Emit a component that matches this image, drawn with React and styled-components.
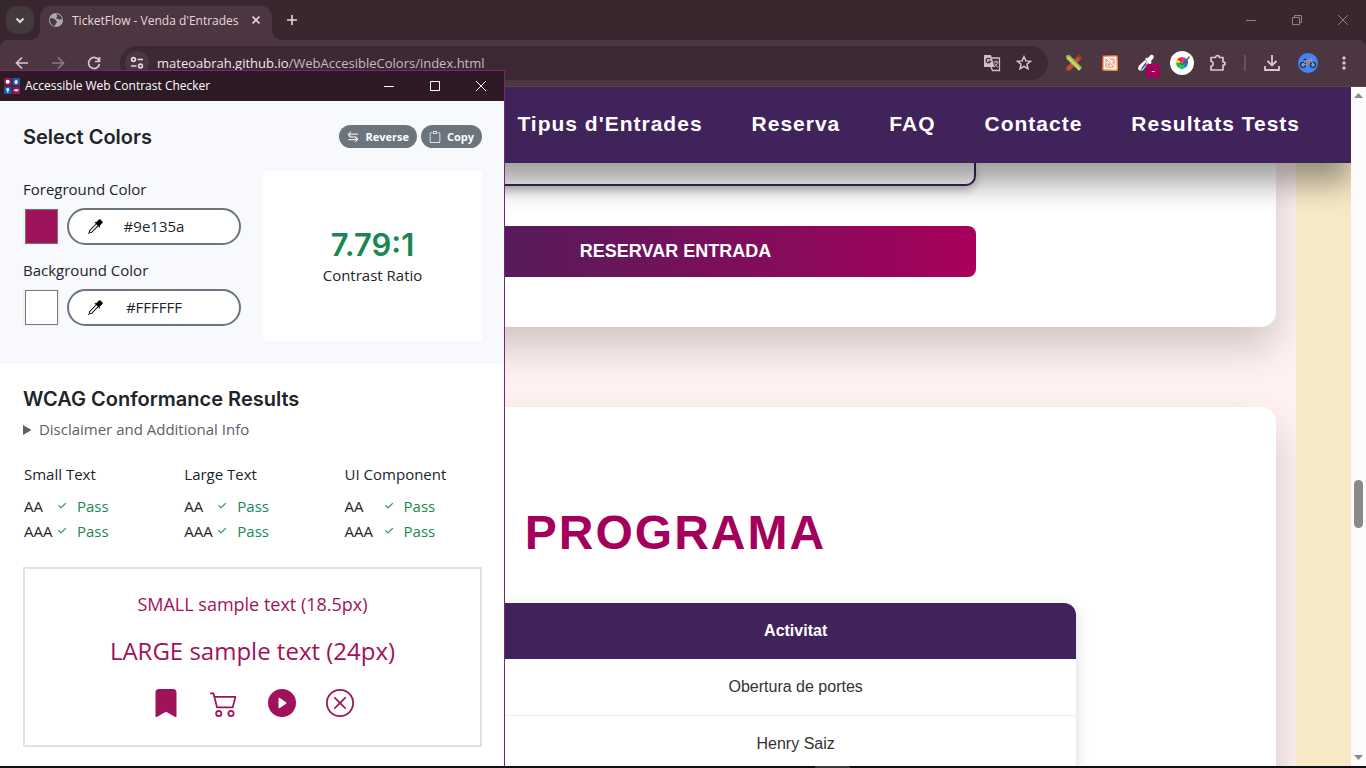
import React from "react";
import styled, { createGlobalStyle } from "styled-components";
import {
  BsBookmarkFill,
  BsCart2,
  BsCheck2,
  BsClipboard,
  BsEyedropper,
  BsPlayCircleFill,
  BsXCircle,
} from "react-icons/bs";

const GlobalStyle = createGlobalStyle`
  *, *::before, *::after { box-sizing: border-box; }
  body { margin: 0; overflow: hidden; }
  button, input { font: inherit; color: inherit; margin: 0; }
  h1, h2, h3, p { margin: 0; }
`;

const uiFont = `"Open Sans", "Noto Sans", sans-serif`;
const arial = `"Liberation Sans", Arial, sans-serif`;
const inter = `Inter, sans-serif`;

const Desktop = styled.div`
  position: relative;
  display: flex;
  flex-direction: column;
  height: 100vh;
  overflow: hidden;
  background: #38272f;
  font-family: ${uiFont};
`;

/* ---------- browser chrome ---------- */

const TitleBar = styled.header`
  display: flex;
  height: 40px;
  flex: none;
  padding-left: 6px;
  background: #38272f;
  color: #e6d7dd;
`;

const TabSearch = styled.button`
  display: grid;
  place-items: center;
  width: 28px;
  height: 28px;
  margin: 6px 6px 0 0;
  padding: 0;
  border: 0;
  border-radius: 10px;
  background: #44393e;
`;

const Tab = styled.div`
  position: relative;
  display: flex;
  align-items: center;
  width: 232px;
  height: 34px;
  margin-top: 6px;
  padding: 0 8px 6px;
  border-radius: 10px 10px 0 0;
  background: #4c3641;
  font-size: 12px;

  &::before,
  &::after {
    content: "";
    position: absolute;
    bottom: 0;
    width: 10px;
    height: 10px;
  }
  &::before {
    right: 100%;
    background: radial-gradient(circle at 0 0, transparent 10px, #4c3641 10px);
  }
  &::after {
    left: 100%;
    background: radial-gradient(circle at 100% 0, transparent 10px, #4c3641 10px);
  }
`;

const TabTitle = styled.span`
  flex: 1;
  margin-left: 8px;
  white-space: nowrap;
`;

const BareButton = styled.button`
  position: relative;
  display: grid;
  place-items: center;
  flex: none;
  width: ${(p) => p.$w}px;
  height: ${(p) => p.$h}px;
  padding: 0;
  border: 0;
  background: transparent;
`;

const NewTab = styled(BareButton)`
  margin: 6px 0 0 6px;
`;

const WindowControls = styled.div`
  display: flex;
  margin-left: auto;
  color: ${(p) => p.$color};
`;

const Toolbar = styled.div`
  display: flex;
  align-items: center;
  flex: none;
  height: 47px;
  padding: 0 4px;
  border-bottom: 1px solid #54484b;
  border-radius: 8px 8px 0 0;
  background: #4c3641;
  color: #dfc3d1;
`;

const Omnibox = styled.div`
  display: flex;
  align-items: center;
  flex: 1;
  height: 34px;
  margin: 0 8px;
  padding: 0 8px 0 5px;
  border-radius: 17px;
  background: #3b2933;
`;

const SiteInfo = styled(BareButton)`
  border-radius: 50%;
  background: #4c3641;
`;

const Address = styled.div`
  flex: 1;
  margin-left: 8px;
  color: #c9bac2;
  font-size: 13px;
  line-height: 20px;
  b {
    color: #f3e6ec;
    font-weight: 400;
  }
`;

const Badge = styled.span`
  position: absolute;
  left: 18px;
  top: 18px;
  width: 14px;
  height: 14px;
  border-radius: 3px;
  background: #a3005c;
  color: #fff;
  font-size: 10px;
  line-height: 13px;
  text-align: center;
`;

const ToolDivider = styled.span`
  width: 2px;
  height: 16px;
  margin: 0 8px;
  background: #6a515e;
`;

/* ---------- web page ---------- */

const Viewport = styled.div`
  display: flex;
  flex: 1;
  min-height: 0;
`;

const Page = styled.div`
  flex: 1;
  min-width: 0;
  overflow: hidden;
  background: #f6e9c7;
  font-family: ${arial};
`;

const SiteHeader = styled.nav`
  position: relative;
  z-index: 1;
  display: flex;
  justify-content: flex-end;
  align-items: center;
  gap: 49px;
  height: 76px;
  padding: 0 51px 2px 0;
  background: #3f235a;
  box-shadow: 0 20px 30px rgba(0, 0, 0, 0.38);
`;

const NavLink = styled.a`
  color: #fff;
  font-size: 21px;
  font-weight: 700;
  letter-spacing: 1px;
  line-height: 24px;
  text-decoration: none;
  white-space: nowrap;
`;

const Main = styled.main`
  display: flex;
  flex-direction: column;
  gap: 80px;
  height: 100%;
  margin: 0 55px;
  padding: 0 20px;
  overflow: hidden;
  background: #fff2f0;
`;

const Card = styled.section`
  padding: ${(p) => (p.$open ? "0 200px 50px" : "98px 200px 50px")};
  border-radius: ${(p) => (p.$open ? "0 0 15px 15px" : "15px")};
  background: #fff;
  box-shadow: 0 20px 40px rgba(0, 0, 0, 0.19);
`;

const BookingForm = styled.form`
  display: flex;
  flex-direction: column;
  gap: 40px;
  max-width: 601px;
  margin: 0 auto;
`;

const Field = styled.input`
  height: 23px;
  border: 2px solid #3f235a;
  border-top: 0;
  border-radius: 0 0 10px 10px;
  background: #fff;
  box-shadow: 0 4px 10px rgba(0, 0, 0, 0.25);
`;

const SubmitButton = styled.button`
  height: 51px;
  border: 0;
  border-radius: 8px;
  background: linear-gradient(90deg, #3f235a, #a8005c);
  color: #fff;
  font-size: 18px;
  font-weight: 700;
`;

const SectionTitle = styled.h2`
  margin-bottom: 42px;
  color: #a3005c;
  font-size: 48px;
  letter-spacing: 2px;
  line-height: 56px;
  text-align: center;
`;

const Schedule = styled.table`
  width: 100%;
  table-layout: fixed;
  border-spacing: 0;
  overflow: hidden;
  border-radius: 12px;
  background: #fff;
  box-shadow: 0 4px 15px rgba(0, 0, 0, 0.15);
  color: #333;
  font-size: 16px;
  line-height: 20px;
  text-align: center;

  th,
  td {
    padding: 18px;
  }
  th {
    background: #3f235a;
    color: #fff;
  }
  th:first-child {
    width: 30%;
  }
  td {
    border-bottom: 1px solid #eee;
  }
`;

const Scrollbar = styled.div`
  display: flex;
  flex-direction: column;
  align-items: center;
  flex: none;
  width: 15px;
  padding: 6px 0;
  background: #fcfcfc;
`;

const Thumb = styled.span`
  width: 9px;
  height: 48px;
  border-radius: 5px;
  background: #8a8a8a;
`;

const Track = styled.span`
  flex: ${(p) => p.$grow} 0 0;
`;

const Taskbar = styled.footer`
  position: relative;
  z-index: 3;
  flex: none;
  height: 2px;
  background: linear-gradient(90deg, #101114 815px, #3a3a3c 815px, #3a3a3c 850px, #101114 850px);
`;

/* ---------- contrast checker window ---------- */

const Popup = styled.aside`
  position: absolute;
  z-index: 2;
  left: 0;
  top: 70px;
  bottom: 2px;
  width: 505px;
  overflow: hidden;
  border-top: 1px solid #7b2473;
  border-right: 1px solid #7b2473;
  background: #fff;
  color: #212529;
  font-size: 15px;
  line-height: 24px;
`;

const PopupBar = styled.div`
  display: flex;
  align-items: center;
  height: 30px;
  padding-left: 4px;
  background: #2d1a25;
  color: #fff;
  font-size: 12px;
`;

const PopupTitle = styled.span`
  margin-left: 5px;
`;

const Picker = styled.section`
  padding: 24px 22px 23px 23px;
  background: #f8f9fc;
`;

const PickerHead = styled.div`
  display: flex;
  align-items: center;
  gap: 4px;
  height: 23px;
  margin-bottom: 23px;
`;

const Heading = styled.h1`
  flex: 1;
  font-family: ${inter};
  font-size: 20px;
  font-weight: 600;
  line-height: 24px;
`;

const PillButton = styled.button`
  display: flex;
  align-items: center;
  gap: 6px;
  height: 23px;
  padding: 0 8px;
  border: 0;
  border-radius: 12px;
  background: #6c757d;
  color: #fff;
  font-size: 11px;
  font-weight: 700;
`;

const PickerGrid = styled.div`
  display: grid;
  grid-template-columns: 218fr 219fr;
  gap: 22px;
`;

const ColorFields = styled.div`
  display: flex;
  flex-direction: column;
  padding-top: 6px;
`;

const ColorLabel = styled.label`
  margin-bottom: 7px;
`;

const ColorRow = styled.div`
  display: flex;
  gap: 7px;
  margin-bottom: 13px;
`;

const Swatch = styled.input`
  appearance: none;
  width: 37px;
  height: 37px;
  padding: 1px 2px;
  border: 0;
  background: #f0f1f3;

  &::-webkit-color-swatch-wrapper {
    padding: 0;
  }
  &::-webkit-color-swatch {
    border: 1px solid #777;
    border-radius: 0;
  }
`;

const HexPill = styled.div`
  display: flex;
  align-items: center;
  flex: 1;
  height: 37px;
  padding-right: 52px;
  border: 2px solid #6c757d;
  border-radius: 19px;
  background: #fff;
`;

const HexInput = styled.input`
  flex: 1;
  width: 0;
  padding: 0 0 2px;
  border: 0;
  outline: 0;
  background: transparent;
  text-align: center;
`;

const Ratio = styled.div`
  display: flex;
  flex-direction: column;
  align-items: center;
  justify-content: center;
  height: 170px;
  background: #fff;
`;

const RatioValue = styled.strong`
  padding-top: 2px;
  color: #198754;
  font-family: ${inter};
  font-size: 31px;
  font-weight: 600;
  line-height: 36px;
`;

const Results = styled.section`
  padding: 23px 22px 20px 23px;
`;

const Disclaimer = styled.details`
  margin: 6px 0 21px;
  color: #5c6166;
`;

const ResultGrid = styled.div`
  display: grid;
  grid-template-columns: 35% 35% 30%;
  margin: 0 0 23px 1px;
`;

const ResultTitle = styled.h3`
  margin-bottom: 8px;
  font-size: 15px;
  font-weight: 400;
`;

const ResultRow = styled.p`
  display: grid;
  grid-template-columns: ${(p) => (p.$wide ? 39 : 33)}px 20px 1fr;
  line-height: 25px;
  svg {
    margin-top: 7px;
    stroke-width: 1;
  }
`;

const Pass = styled.span`
  display: contents;
  color: #198754;
`;

const Sample = styled.div`
  display: flex;
  flex-direction: column;
  align-items: center;
  height: 180px;
  padding-top: 20px;
  border: 2px solid #dee2e6;
  color: #9e135a;
`;

const SampleText = styled.p`
  margin-bottom: 17px;
  font-size: ${(p) => p.$size}px;
  line-height: 30px;
`;

const SampleIcons = styled.div`
  display: flex;
  gap: 30px;
  margin-top: 6px;
`;

/* ---------- drawings ---------- */

const Stroke = ({ d, size = 16, w = 2, ...rest }) => (
  <svg width={size} height={size} viewBox="0 0 16 16" fill="none" stroke="currentColor" strokeWidth={w} {...rest}>
    <path d={d} />
  </svg>
);

const Globe = () => (
  <svg width="16" height="16" viewBox="0 0 16 16">
    <circle cx="8" cy="8" r="7" fill="#a5abb0" />
    <path
      d="M2 6.500c2.500-.5 3.500.3 5 .8.500 1.700 2 1.200 2 2.700 0 1-1.200 1-1.400 2l-.9 2C4 13.500 1.500 10.500 2 6.500zM8.500 2.200C8 3.500 10 3.200 9.500 4.600 9 5.600 8 5 8 6.200c1.800 0 2.200 1.500 3.500 1.200 1-.2 1.300-.2 2.500 0C14 4.500 11.500 2.200 8.500 2.200z"
      fill="#4c3641"
    />
  </svg>
);

const Tune = () => (
  <svg width="14" height="14" viewBox="0 0 14 14" fill="none" stroke="#e9d5de" strokeWidth="1.6">
    <circle cx="3.500" cy="3.500" r="1.900" />
    <path d="M7.500 3.500H13M1 10h5.500" />
    <circle cx="10.500" cy="10" r="1.900" />
  </svg>
);

const Translate = () => (
  <svg width="18" height="18" viewBox="0 0 18 18">
    <path d="M8 4h8.500v12.500H9.500L8 13z" fill="none" stroke="#cdbdc5" strokeWidth="1.300" />
    <path d="M10.500 8h5M13 6.500V8M14.500 8c-.5 2.500-2 4-3.500 5M11.500 9.500c1 2 2 3 3.500 3.700" fill="none" stroke="#cdbdc5" />
    <path d="M1 1h7l3.500 12H1z" fill="#cdbdc5" />
    <path d="M7.300 5.200A2.300 2.300 0 1 0 7.600 7.300H5.400" fill="none" stroke="#3b2933" strokeWidth="1.200" />
  </svg>
);

const Star = () => (
  <Stroke w={1.5} d="M8 1.700l1.900 4.200 4.500.4-3.400 3 1 4.400L8 11.400l-4 2.300 1-4.400-3.400-3 4.500-.4z" />
);

const CrossedTools = () => (
  <svg width="18" height="18" viewBox="0 0 18 18">
    <path d="M14 1l3 3L5 16.500H1.500V13z" fill="#c0502c" />
    <path d="M13 2l3 3" stroke="#8f3720" strokeWidth="1.500" />
    <path d="M1 1.500L4.500 1 17 13.500 14 17 1.500 5z" fill="#a5bd4d" />
    <path d="M3 3.500L15 15.500" stroke="#d7e07f" strokeWidth="1.500" />
  </svg>
);

const RulerTool = () => (
  <svg width="18" height="18" viewBox="0 0 18 18">
    <defs>
      <linearGradient id="frame" x1="0" y1="0" x2="1" y2="1">
        <stop offset="0" stopColor="#d63a2d" />
        <stop offset="1" stopColor="#f5a04a" />
      </linearGradient>
    </defs>
    <rect x="1" y="1" width="16" height="16" rx="2" fill="url(#frame)" />
    <rect x="2.500" y="2.500" width="13" height="13" fill="#fdf3ea" />
    <path d="M5 5l8 8H5zM7 9.500v1.500h2zM9 5h4v6M11.500 7H13M11.500 9H13" fill="none" stroke="#e58a68" />
  </svg>
);

const Dropper = () => (
  <svg width="18" height="18" viewBox="0 0 18 18">
    <path d="M8 6l3.500 3.500-6 7H2.500L1 15l.5-3z" fill="#f4f4f8" />
    <path d="M8.500 8.500l1.500 1.500-5 5.500H3.500z" fill="#3c4fa0" />
    <path d="M8 5l2-1.500 1 .5 2-2.500c2-2 5 .5 3.200 3L14 7l.5 1.500L13 11z" fill="#fff" />
  </svg>
);

const ColorWheel = () => (
  <svg width="24" height="24" viewBox="0 0 24 24">
    <circle cx="12" cy="12" r="12" fill="#fff" />
    <path d="M12 12L7 8.500A6 6 0 0 1 12 6z" fill="#f22b1d" />
    <path d="M12 12V6a6 6 0 0 1 4 1.500z" fill="#e427d6" />
    <path d="M12 12l4-4.500a6 6 0 0 1 2 4.500z" fill="#5735c9" />
    <path d="M12 12h6a6 6 0 0 1-3 5z" fill="#2379e8" />
    <path d="M12 12l3 5-3 1.500-3-1.500z" fill="#11c78c" />
    <path d="M12 12l-3 5a6 6 0 0 1-3-5z" fill="#20b820" />
    <path d="M12 12H6a6 6 0 0 1 1-3.500z" fill="#f3da11" />
    <path d="M10 11.500L12.500 14l7-8.500" fill="none" stroke="#37852b" strokeWidth="1.500" />
  </svg>
);

const Puzzle = () => (
  <svg width="18" height="18" viewBox="0 0 18 18" fill="none" stroke="#dfc3d1" strokeWidth="1.700">
    <path
      d="M2 3.500h4.500C6.500 1 10.500 1 10.500 3.500H14v4.300c2.800 0 2.800 3.400 0 3.400V16H2v-3.800c2.800-.2 2.800-4.700 0-4.900z"
      strokeLinejoin="round"
    />
  </svg>
);

const Bike = () => (
  <svg width="20" height="20" viewBox="0 0 20 20">
    <circle cx="10" cy="10" r="10" fill="#4285f4" />
    <g fill="#7aa0d8" stroke="#1d2c55" strokeWidth="1.300">
      <circle cx="5" cy="11.800" r="2.500" />
      <circle cx="15" cy="11.800" r="2.500" />
    </g>
    <path d="M5 11.800L7.500 7.500h5l-3 4zM7.500 7.500l2 4M15 11.800L12.500 5.500h1.500" fill="none" stroke="#e0846a" />
    <path d="M5.500 6.500h3" stroke="#1d2c55" strokeWidth="1.300" />
  </svg>
);

const AppLogo = () => (
  <svg width="16" height="16" viewBox="0 0 16 16">
    <path d="M0 0h7.500v7.500H0zM8.500 8.500H16V16H8.500z" fill="#8b1d4c" />
    <path d="M8.500 0H16v7.500H8.500zM0 8.500h7.500V16H0z" fill="#2456a8" />
    <circle cx="3.700" cy="3.700" r="2" fill="#fff" />
    <path d="M12.200 1.500l1.800 2-1 2.500h-1.800l-1-2.500zM3.700 10c2 0 2 2 .8 3v1.500H3V13c-1.300-1-1.300-3 .7-3z" fill="#dfe8fa" />
    <path d="M9.500 12.200c1.500-1.600 4-1.600 5.500 0-1.500 1.600-4 1.600-5.500 0z" fill="#f0cfdc" />
  </svg>
);

const ReverseIcon = () => (
  <Stroke
    size={12}
    w={1.3}
    d="M5.500 1L2 4.200l3.500 3.200M2 4.200h12.500M2 4.200C2 7 3 8 5.500 8h5C13 8 14 9 14 11.600M1.500 11.600H14M10.500 8.400L14 11.600l-3.500 3.200"
  />
);

const Triangle = ({ down }) => (
  <svg width="9" height="5" viewBox="0 0 9 5" fill="#8a8a8a">
    <path d={down ? "M0 0h9L4.500 5z" : "M0 5h9L4.500 0z"} />
  </svg>
);

/* ---------- composed parts ---------- */

const paths = {
  minimize: "M3 8.500h10",
  maximize: "M3.500 3.500h9v9h-9z",
  restore: "M3.500 5.500h7v7h-7zM5.500 5.500v-2h7v7h-2",
  close: "M3 3l10 10M13 3L3 13",
};

const WindowButtons = ({ middle, height, color }) => (
  <WindowControls $color={color}>
    {["minimize", middle, "close"].map((name) => (
      <BareButton key={name} aria-label={name} $w={46} $h={height}>
        <Stroke d={paths[name]} w={1} />
      </BareButton>
    ))}
  </WindowControls>
);

const ColorField = ({ id, label, value }) => (
  <>
    <ColorLabel htmlFor={id}>{label}</ColorLabel>
    <ColorRow>
      <Swatch type="color" aria-label={label + " swatch"} defaultValue={value.toLowerCase()} />
      <HexPill>
        <BareButton $w={52} $h={33} aria-label={"Pick " + label}>
          <BsEyedropper size={15} color="#000" />
        </BareButton>
        <HexInput id={id} defaultValue={value} />
      </HexPill>
    </ColorRow>
  </>
);

const Result = ({ title, wide }) => (
  <div>
    <ResultTitle>{title}</ResultTitle>
    {["AA", "AAA"].map((level) => (
      <ResultRow key={level} $wide={wide}>
        <span>{level}</span>
        <Pass>
          <BsCheck2 size={10} color="#198754" />
          <span>Pass</span>
        </Pass>
      </ResultRow>
    ))}
  </div>
);

const navItems = ["Tipus d'Entrades", "Reserva", "FAQ", "Contacte", "Resultats Tests"];
const activities = ["Obertura de portes", "Henry Saiz"];

export default function App() {
  return (
    <Desktop>
      <GlobalStyle />
      <TitleBar>
        <TabSearch aria-label="Search tabs">
          <Stroke d="M4.500 6.500L8 10l3.500-3.500" />
        </TabSearch>
        <Tab>
          <Globe />
          <TabTitle>TicketFlow - Venda d'Entrades</TabTitle>
          <BareButton aria-label="Close tab" $w={16} $h={16}>
            <Stroke d="M4.500 4.500l7 7M11.500 4.500l-7 7" w={1.6} />
          </BareButton>
        </Tab>
        <NewTab aria-label="New tab" $w={28} $h={28}>
          <Stroke d="M8 3v10M3 8h10" w={1.6} />
        </NewTab>
        <WindowButtons middle="restore" height={40} color="#8d8086" />
      </TitleBar>

      <Toolbar>
        <BareButton aria-label="Back" $w={36} $h={34}>
          <Stroke d="M14 8H3M8 2.500L2.500 8 8 13.500" w={1.7} />
        </BareButton>
        <BareButton aria-label="Forward" $w={36} $h={34}>
          <Stroke d="M2 8h11M8 2.500L13.500 8 8 13.500" w={1.7} opacity="0.45" />
        </BareButton>
        <BareButton aria-label="Reload" $w={36} $h={34}>
          <Stroke d="M13 5.500A5.500 5.500 0 1 0 13.500 9M13.500 2v4.500H9" w={1.7} />
        </BareButton>
        <Omnibox>
          <SiteInfo aria-label="Site information" $w={24} $h={24}>
            <Tune />
          </SiteInfo>
          <Address>
            <b>mateoabrah.github.io</b>/WebAccesibleColors/index.html
          </Address>
          <BareButton aria-label="Translate" $w={32} $h={34}>
            <Translate />
          </BareButton>
          <BareButton aria-label="Bookmark" $w={32} $h={34}>
            <Star />
          </BareButton>
        </Omnibox>
        <BareButton aria-label="Tools" $w={36} $h={34}>
          <CrossedTools />
        </BareButton>
        <BareButton aria-label="Ruler" $w={36} $h={34}>
          <RulerTool />
        </BareButton>
        <BareButton aria-label="Color picker" $w={36} $h={34}>
          <Dropper />
          <Badge>-</Badge>
        </BareButton>
        <BareButton aria-label="Contrast checker" $w={36} $h={34}>
          <ColorWheel />
        </BareButton>
        <BareButton aria-label="Extensions" $w={36} $h={34}>
          <Puzzle />
        </BareButton>
        <ToolDivider />
        <BareButton aria-label="Downloads" $w={36} $h={34}>
          <Stroke d="M8 0v10.500M3.500 6L8 10.500 12.500 6M1 11v4h14v-4" w={1.8} />
        </BareButton>
        <BareButton aria-label="Profile" $w={36} $h={34}>
          <Bike />
        </BareButton>
        <BareButton aria-label="Menu" $w={36} $h={34}>
          <svg width="16" height="16" viewBox="0 0 16 16" fill="currentColor">
            <circle cx="8" cy="3" r="1.700" />
            <circle cx="8" cy="8" r="1.700" />
            <circle cx="8" cy="13" r="1.700" />
          </svg>
        </BareButton>
      </Toolbar>

      <Viewport>
        <Page>
          <SiteHeader>
            {navItems.map((item) => (
              <NavLink key={item} href="#">
                {item}
              </NavLink>
            ))}
          </SiteHeader>
          <Main>
            <Card $open>
              <BookingForm>
                <Field aria-label="Entrada" />
                <SubmitButton type="button">RESERVAR ENTRADA</SubmitButton>
              </BookingForm>
            </Card>
            <Card>
              <SectionTitle>PROGRAMA</SectionTitle>
              <Schedule>
                <thead>
                  <tr>
                    <th></th>
                    <th>Activitat</th>
                  </tr>
                </thead>
                <tbody>
                  {activities.map((name) => (
                    <tr key={name}>
                      <td></td>
                      <td>{name}</td>
                    </tr>
                  ))}
                </tbody>
              </Schedule>
            </Card>
          </Main>
        </Page>
        <Scrollbar>
          <Triangle />
          <Track $grow={382} />
          <Thumb />
          <Track $grow={227} />
          <Triangle down />
        </Scrollbar>
      </Viewport>

      <Popup>
        <PopupBar>
          <AppLogo />
          <PopupTitle>Accessible Web Contrast Checker</PopupTitle>
          <WindowButtons middle="maximize" height={30} color="#fff" />
        </PopupBar>
        <Picker>
          <PickerHead>
            <Heading>Select Colors</Heading>
            <PillButton>
              <ReverseIcon />
              Reverse
            </PillButton>
            <PillButton>
              <BsClipboard size={12} />
              Copy
            </PillButton>
          </PickerHead>
          <PickerGrid>
            <ColorFields>
              <ColorField id="fg" label="Foreground Color" value="#9e135a" />
              <ColorField id="bg" label="Background Color" value="#FFFFFF" />
            </ColorFields>
            <Ratio>
              <RatioValue>7.79:1</RatioValue>
              Contrast Ratio
            </Ratio>
          </PickerGrid>
        </Picker>
        <Results>
          <Heading as="h2">WCAG Conformance Results</Heading>
          <Disclaimer>
            <summary>Disclaimer and Additional Info</summary>
          </Disclaimer>
          <ResultGrid>
            <Result title="Small Text" />
            <Result title="Large Text" />
            <Result title="UI Component" wide />
          </ResultGrid>
          <Sample>
            <SampleText $size={18}>SMALL sample text (18.5px)</SampleText>
            <SampleText $size={24}>LARGE sample text (24px)</SampleText>
            <SampleIcons>
              <BsBookmarkFill size={28} />
              <BsCart2 size={28} />
              <BsPlayCircleFill size={28} />
              <BsXCircle size={28} />
            </SampleIcons>
          </Sample>
        </Results>
      </Popup>
      <Taskbar />
    </Desktop>
  );
}
